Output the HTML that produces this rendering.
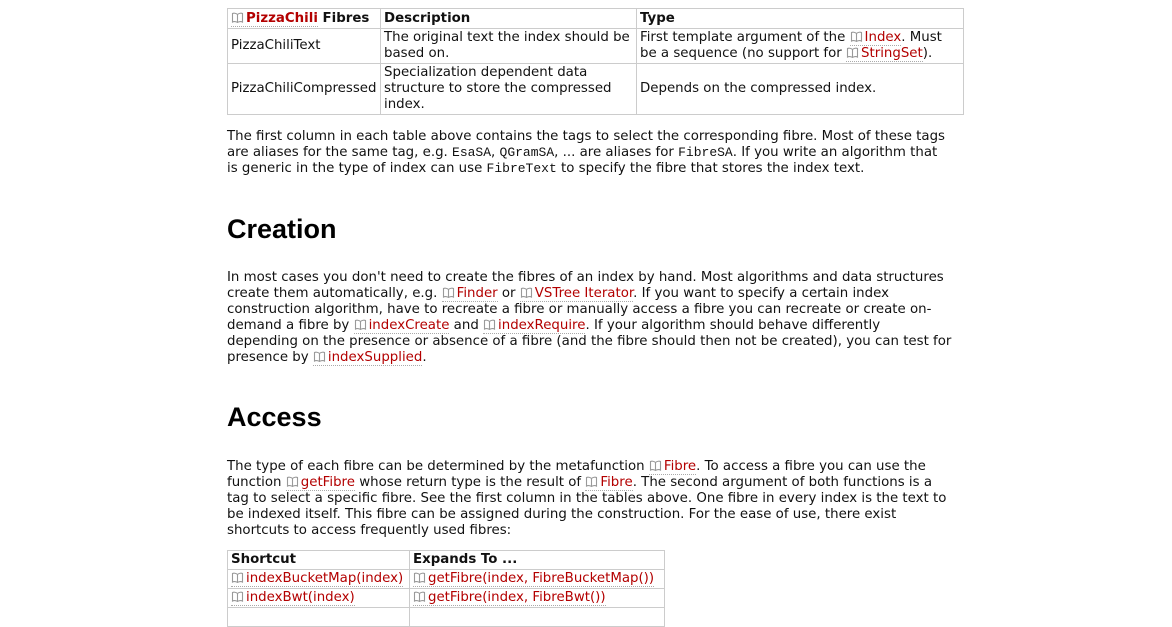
<!DOCTYPE html>
<html><head><meta charset="utf-8"><style>
body{margin:0;background:#fff;width:1172px;height:611px;overflow:hidden;font-family:"DejaVu Sans","Liberation Sans",sans-serif;font-size:13.35px;color:#111;position:relative}
.p{position:absolute;left:227px;line-height:16px;white-space:nowrap}
a{color:#b30000;text-decoration:none;border-bottom:1px dotted #aaa}
svg.i{display:inline-block;width:13px;height:11px;margin-right:2px;vertical-align:-1px}
code{font-family:"Liberation Mono",monospace;font-size:13px}
h1{position:absolute;left:227px;margin:0;font-family:"Liberation Sans",sans-serif;font-size:27px;font-weight:bold;color:#000}
table{position:absolute;border-collapse:collapse;left:227px}
td,th{border:1px solid #ccc;padding:0 3px;line-height:16px;text-align:left;vertical-align:middle;white-space:nowrap}
th{font-weight:bold;height:18px}
.t2 td{height:18px}
</style></head><body>
<svg width="0" height="0" style="position:absolute"><defs><symbol id="b" viewBox="0 0 13 11"><path d="M6.5 2.5C5 1 2.5 1 1.5 1.5V10C2.5 9.3 5 9.3 6.5 10.5C8 9.3 10.5 9.3 11.5 10V1.5C10.5 1 8 1 6.5 2.5ZM6.5 2.5V10.5" fill="none" stroke="#999" stroke-width="1.1"/></symbol></defs></svg>
<table style="top:8px;width:737px">
<tr><th style="width:146px;height:19px"><a><svg class="i"><use href="#b"/></svg><b>PizzaChili</b></a> Fibres</th><th style="width:249px">Description</th><th>Type</th></tr>
<tr style="height:35px"><td>PizzaChiliText</td><td>The original text the index should be<br>based on.</td><td>First template argument of the <a><svg class="i"><use href="#b"/></svg>Index</a>. Must<br>be a sequence (no support for <a><svg class="i"><use href="#b"/></svg>StringSet</a>).</td></tr>
<tr style="height:51px"><td>PizzaChiliCompressed</td><td>Specialization dependent data<br>structure to store the compressed<br>index.</td><td>Depends on the compressed index.</td></tr>
</table>
<div class="p" style="top:129px">The first column in each table above contains the tags to select the corresponding fibre. Most of these tags<br>are aliases for the same tag, e.g. <code>EsaSA</code>, <code>QGramSA</code>, ... are aliases for <code>FibreSA</code>. If you write an algorithm that<br>is generic in the type of index can use <code>FibreText</code> to specify the fibre that stores the index text.</div>
<h1 style="top:214px">Creation</h1>
<div class="p" style="top:270px">In most cases you don't need to create the fibres of an index by hand. Most algorithms and data structures<br>create them automatically, e.g. <a><svg class="i"><use href="#b"/></svg>Finder</a> or <a><svg class="i"><use href="#b"/></svg>VSTree Iterator</a>. If you want to specify a certain index<br>construction algorithm, have to recreate a fibre or manually access a fibre you can recreate or create on-<br>demand a fibre by <a><svg class="i"><use href="#b"/></svg>indexCreate</a> and <a><svg class="i"><use href="#b"/></svg>indexRequire</a>. If your algorithm should behave differently<br>depending on the presence or absence of a fibre (and the fibre should then not be created), you can test for<br>presence by <a><svg class="i"><use href="#b"/></svg>indexSupplied</a>.</div>
<h1 style="top:402px">Access</h1>
<div class="p" style="top:459px">The type of each fibre can be determined by the metafunction <a><svg class="i"><use href="#b"/></svg>Fibre</a>. To access a fibre you can use the<br>function <a><svg class="i"><use href="#b"/></svg>getFibre</a> whose return type is the result of <a><svg class="i"><use href="#b"/></svg>Fibre</a>. The second argument of both functions is a<br>tag to select a specific fibre. See the first column in the tables above. One fibre in every index is the text to<br>be indexed itself. This fibre can be assigned during the construction. For the ease of use, there exist<br>shortcuts to access frequently used fibres:</div>
<table class="t2" style="top:550px;width:438px">
<tr><th style="width:175px">Shortcut</th><th>Expands To ...</th></tr>
<tr><td><a><svg class="i"><use href="#b"/></svg>indexBucketMap(index)</a></td><td><a><svg class="i"><use href="#b"/></svg>getFibre(index, FibreBucketMap())</a></td></tr>
<tr><td><a><svg class="i"><use href="#b"/></svg>indexBwt(index)</a></td><td><a><svg class="i"><use href="#b"/></svg>getFibre(index, FibreBwt())</a></td></tr>
<tr><td>&nbsp;</td><td>&nbsp;</td></tr>
</table>
</body></html>
